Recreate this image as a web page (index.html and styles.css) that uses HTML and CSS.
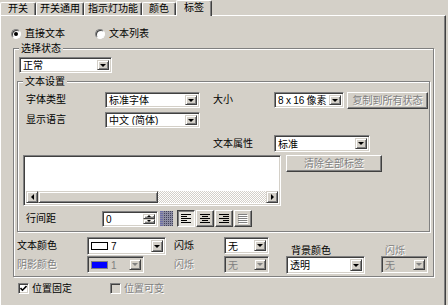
FILE: index.html
```html
<!DOCTYPE html>
<html lang="zh-CN">
<head>
<meta charset="utf-8">
<title>标签</title>
<link rel="stylesheet" href="styles.css">
</head>
<body>
<div class="tabs">
  <div class="tab w-1">开关</div>
  <div class="tab w-2">开关通用</div>
  <div class="tab w-3">指示灯功能</div>
  <div class="tab w-4">颜色</div>
  <div class="tab w-5 sel">标签</div>
</div>
<div class="panel">
  <div class="radios">
    <div class="radio"><span class="rb on"></span><span>直接文本</span></div>
    <div class="radio r-list"><span class="rb"></span><span>文本列表</span></div>
  </div>
  <fieldset class="group outer">
    <legend>选择状态</legend>
    <div class="combo state"><span class="val">正常</span><span class="arr"></span></div>
    <fieldset class="group inner">
      <legend>文本设置</legend>
      <div class="row r1">
        <span class="lbl l-main">字体类型</span>
        <div class="combo c95"><span class="val">标准字体</span><span class="arr"></span></div>
        <span class="lbl l-side">大小</span>
        <div class="combo c70"><span class="val size-val">8 x 16 像素</span><span class="arr"></span></div>
        <div class="btn dis copy">复制到所有状态</div>
      </div>
      <div class="row r2">
        <span class="lbl l-main">显示语言</span>
        <div class="combo c95"><span class="val">中文 (简体)</span><span class="arr"></span></div>
      </div>
      <div class="row r3">
        <span class="lbl l-side attr">文本属性</span>
        <div class="combo c96"><span class="val">标准</span><span class="arr"></span></div>
      </div>
      <div class="row r4">
        <div class="memo">
          <div class="memo-body"></div>
          <div class="hscroll">
            <span class="raised sb-btn"><span class="tri-l"></span></span>
            <span class="raised sb-thumb"></span>
            <span class="sb-track"></span>
            <span class="raised sb-btn"><span class="tri-r"></span></span>
          </div>
        </div>
        <div class="btn dis clear">清除全部标签</div>
      </div>
      <div class="row r5">
        <span class="lbl l-spacing">行间距</span>
        <div class="spin"><span class="val">0</span><span class="spin-btns"><span class="raised sp"><span class="tri-u"></span></span><span class="raised sp"><span class="tri-d"></span></span></span></div>
        <span class="gridbtn"><svg width="13" height="15" viewBox="0 0 13 15"><rect width="13" height="15" fill="#44445a"/><rect width="3" height="15" fill="#6e6ea8"/><path d="M3.5 0V15M5.5 0V15M7.5 0V15M9.5 0V15M11.5 0V15M0 1.5H13M0 3.5H13M0 5.5H13M0 7.5H13M0 9.5H13M0 11.5H13M0 13.5H13" stroke="#8e8ea4" stroke-width="1"/></svg></span>
        <div class="aligns">
          <span class="tbtn pressed"><svg width="10" height="9" viewBox="0 0 10 9"><path d="M0 0.5H10M0 2.5H6M0 4.5H10M0 6.5H6M0 8.5H10" stroke="#000"/></svg></span>
          <span class="tbtn"><svg width="10" height="9" viewBox="0 0 10 9"><path d="M0 0.5H10M2 2.5H8M0 4.5H10M2 6.5H8M0 8.5H10" stroke="#000"/></svg></span>
          <span class="tbtn"><svg width="10" height="9" viewBox="0 0 10 9"><path d="M0 0.5H10M4 2.5H10M0 4.5H10M4 6.5H10M0 8.5H10" stroke="#000"/></svg></span>
          <span class="tbtn"><svg width="10" height="10" viewBox="0 0 10 10"><path d="M1 1.5H10M1 3.5H10M1 5.5H10M1 7.5H10M1 9.5H10" stroke="#fff"/><path d="M0 0.5H9M0 2.5H9M0 4.5H9M0 6.5H9M0 8.5H9" stroke="#808080"/></svg></span>
        </div>
      </div>
    </fieldset>
    <div class="colors">
      <span class="lbl l-a">文本颜色</span>
      <div class="combo c-color"><span class="swatch sw-white"></span><span class="val">7</span><span class="arr"></span></div>
      <span class="lbl l-b">闪烁</span>
      <div class="combo c45"><span class="val">无</span><span class="arr"></span></div>
      <span class="lbl l-top l-bg">背景颜色</span>
      <span class="lbl l-top l-blink dis">闪烁</span>

      <span class="lbl l-a2 dis">阴影颜色</span>
      <div class="combo c-shadow disabled"><span class="swatch sw-blue"></span><span class="val">1</span><span class="arr"></span></div>
      <span class="lbl l-b dis">闪烁</span>
      <div class="combo c45 disabled"><span class="val">无</span><span class="arr"></span></div>
      <div class="combo c79"><span class="val">透明</span><span class="arr"></span></div>
      <div class="combo c47 disabled"><span class="val">无</span><span class="arr"></span></div>
    </div>
  </fieldset>
  <div class="checks">
    <span class="cb"><svg width="7" height="7" viewBox="0 0 7 7"><path d="M0.5 3L2.5 5.2L6.5 1" fill="none" stroke="#000" stroke-width="1.6"/></svg></span>
    <span class="cb-text">位置固定</span>
    <span class="cb disabled second"></span>
    <span class="cb-text dis">位置可变</span>
  </div>
</div>
</body>
</html>
```

FILE: styles.css
```css
* { box-sizing: border-box; }
html, body { margin: 0; padding: 0; }
body {
  width: 448px;
  height: 305px;
  overflow: hidden;
  background: #d4d0c8;
  color: #000;
  font-family: "Liberation Sans", "Noto Sans CJK SC", sans-serif;
  font-size: 10px;
  line-height: 11px;
}

/* tabs */
.tabs { display: flex; align-items: flex-end; height: 15px; }
.tab {
  height: 13px;
  border-top: 1px solid #fff;
  border-left: 1px solid #fff;
  border-right: 1px solid #404040;
  border-radius: 2px 2px 0 0;
  box-shadow: inset -1px 0 #808080;
  text-align: center;
  line-height: 12px;
  white-space: nowrap;
}
.w-1 { width: 36px; }
.w-2 { width: 48px; }
.w-3 { width: 58px; }
.w-4 { width: 34px; }
.w-5 { width: 36px; }
.tab.sel {
  height: 16px;
  margin-bottom: -1px;
  position: relative;
  z-index: 1;
  background: #d4d0c8;
  padding-top: 1px;
}

/* panel */
.panel {
  width: 446px;
  height: 290px;
  border-top: 1px solid #fff;
  border-left: 1px solid #fff;
  border-right: 1px solid #404040;
  box-shadow: inset -1px 0 #808080;
}

/* radios */
.radios { display: flex; height: 11px; margin: 12px 0 0 10px; }
.radio { display: flex; align-items: center; gap: 4px; white-space: nowrap; }
.r-list { margin-left: 30px; }
.rb {
  width: 10px; height: 10px;
  border-radius: 50%;
  border: 1px solid;
  border-color: #808080 #fff #fff #808080;
  box-shadow: inset 1px 1px #404040;
  background: #fff;
  display: flex; align-items: center; justify-content: center;
}
.rb.on::after { content: ""; width: 4px; height: 4px; border-radius: 50%; background: #000; }

/* group boxes */
.group {
  margin: 0;
  padding: 0;
  min-inline-size: 0;
  border: 1px solid #808080;
  box-shadow: inset 1px 1px #fff, 1px 1px #fff;
}
.group > legend {
  margin-left: 5px;
  padding: 0 2px;
  height: 11px;
  line-height: 11px;
  background: #d4d0c8;
  white-space: nowrap;
}
.outer { margin: 4px 0 0 12px; width: 421px; padding-bottom: 2px; }
.inner { margin: 3px 0 0 3px; width: 413px; padding-bottom: 4px; }

/* combos */
.combo {
  display: flex;
  border: 1px solid;
  border-color: #808080 #fff #fff #808080;
  box-shadow: inset 1px 1px #404040, inset -1px -1px #d4d0c8;
  background: #fff;
  padding: 2px;
  height: 16px;
}
.combo .val {
  flex: 1;
  padding-left: 1px;
  line-height: 12px;
  white-space: nowrap;
  overflow: hidden;
}
.combo .size-val { letter-spacing: -0.2px; }
.raised, .arr {
  border: 1px solid;
  border-color: #d4d0c8 #404040 #404040 #d4d0c8;
  box-shadow: inset 1px 1px #fff, inset -1px -1px #808080;
  background: #d4d0c8;
  display: flex; align-items: center; justify-content: center;
}
.arr { width: 12px; flex: none; }
.arr::after {
  content: "";
  border-left: 3px solid transparent;
  border-right: 3px solid transparent;
  border-top: 3px solid #000;
}
.combo.disabled { background: #d4d0c8; }
.combo.disabled .val { color: #808080; }
.combo.disabled .arr::after { border-top-color: #808080; }

.state { margin: 3px 0 0 5px; width: 93px; }
.c95 { width: 95px; }
.c70 { width: 70px; }
.c96 { width: 96px; height: 17px; }
.c45 { width: 45px; height: 17px; }
.c79 { width: 79px; height: 18px; }
.c47 { width: 47px; height: 17px; }
.c-color { width: 79px; height: 18px; }
.c-shadow { width: 57px; height: 17px; }
.c96 .val, .c45 .val, .c47 .val, .c-shadow .val { line-height: 13px; }
.c79 .val, .c-color .val { line-height: 14px; }

.swatch { width: 17px; height: 8px; margin: 0 2px 0 1px; align-self: center; flex: none; }
.sw-white { background: #fff; border: 1px solid #000; }
.sw-blue { background: #0000ff; border: 1px solid #808080; }

/* buttons */
.btn {
  display: flex; align-items: center; justify-content: center;
  border: 1px solid;
  border-color: #fff #404040 #404040 #fff;
  box-shadow: inset -1px -1px #808080;
  background: #d4d0c8;
  white-space: nowrap;
  height: 17px;
}
.dis { color: #808080; text-shadow: 1px 1px #fff; }

/* rows */
.row { display: flex; align-items: flex-start; }
.lbl { line-height: 16px; white-space: nowrap; }
.l-main { margin-left: 8px; width: 79px; }
.l-side { margin-left: 13px; width: 61px; }
.attr { margin-left: 195px; }
.r1 { margin-top: 5px; height: 16px; }
.r2 { margin-top: 4px; height: 16px; }
.r3 { margin-top: 7px; height: 17px; }
.r3 .lbl { line-height: 17px; }
.r4 { margin-top: 3px; height: 51px; }
.r5 { margin-top: 4px; height: 17px; align-items: center; }
.copy { margin-left: 3px; width: 81px; }
.clear { margin-left: 5px; width: 96px; }

/* memo */
.memo {
  margin-left: 5px;
  width: 258px;
  height: 51px;
  border: 1px solid;
  border-color: #808080 #fff #fff #808080;
  box-shadow: inset 1px 1px #404040, inset -1px -1px #d4d0c8;
  background: #fff;
  padding: 2px;
  display: flex;
  flex-direction: column;
}
.memo-body { flex: 1; }
.hscroll { height: 12px; display: flex; }
.sb-btn { width: 12px; flex: none; }
.sb-thumb { width: 120px; flex: none; }
.sb-track {
  flex: 1;
  background-image: repeating-conic-gradient(#fff 0 25%, #d4d0c8 0 50%);
  background-size: 2px 2px;
}
.tri-l { border-top: 3px solid transparent; border-bottom: 3px solid transparent; border-right: 3px solid #000; }
.tri-r { border-top: 3px solid transparent; border-bottom: 3px solid transparent; border-left: 3px solid #000; }
.tri-u { border-left: 2px solid transparent; border-right: 2px solid transparent; border-bottom: 2px solid #000; }
.tri-d { border-left: 2px solid transparent; border-right: 2px solid transparent; border-top: 2px solid #000; }

/* spacing row */
.l-spacing { margin-left: 8px; width: 76px; }
.spin {
  display: flex;
  width: 56px;
  height: 16px;
  border: 1px solid;
  border-color: #808080 #fff #fff #808080;
  box-shadow: inset 1px 1px #404040, inset -1px -1px #d4d0c8;
  background: #fff;
  padding: 2px;
}
.spin .val { flex: 1; line-height: 12px; padding-left: 1px; }
.spin-btns { width: 12px; display: flex; flex-direction: column; }
.sp { height: 6px; }
.gridbtn { margin-left: 2px; width: 13px; height: 15px; display: flex; }
.aligns { margin-left: 4px; display: flex; gap: 1px; }
.tbtn {
  width: 18px; height: 17px;
  display: flex; align-items: center; justify-content: center;
  border: 1px solid;
  border-color: #fff #404040 #404040 #fff;
  box-shadow: inset -1px -1px #808080;
}
.tbtn.pressed {
  border-color: #404040 #fff #fff #404040;
  box-shadow: inset 1px 1px #808080;
  background: #e6e4de;
}

/* colors grid */
.colors {
  display: grid;
  grid-template-columns: 70px 87px 50px 62px 95px 47px;
  grid-template-rows: 19px 18px;
  margin: 5px 0 0 3px;
  align-items: start;
}
.l-a { line-height: 18px; }
.l-a2, .l-b { line-height: 17px; }
.l-top { align-self: end; line-height: 11px; }
.l-bg { padding-left: 5px; }
.l-blink { padding-left: 4px; }

/* checkboxes */
.checks { display: flex; align-items: center; height: 11px; margin: 6px 0 0 17px; }
.cb {
  width: 11px; height: 11px;
  border: 1px solid;
  border-color: #808080 #fff #fff #808080;
  box-shadow: inset 1px 1px #404040, inset -1px -1px #d4d0c8;
  background: #fff;
  display: flex; align-items: center; justify-content: center;
}
.cb.disabled { background: #d4d0c8; }
.cb-text { margin-left: 3px; white-space: nowrap; line-height: 11px; }
.second { margin-left: 38px; }
```
